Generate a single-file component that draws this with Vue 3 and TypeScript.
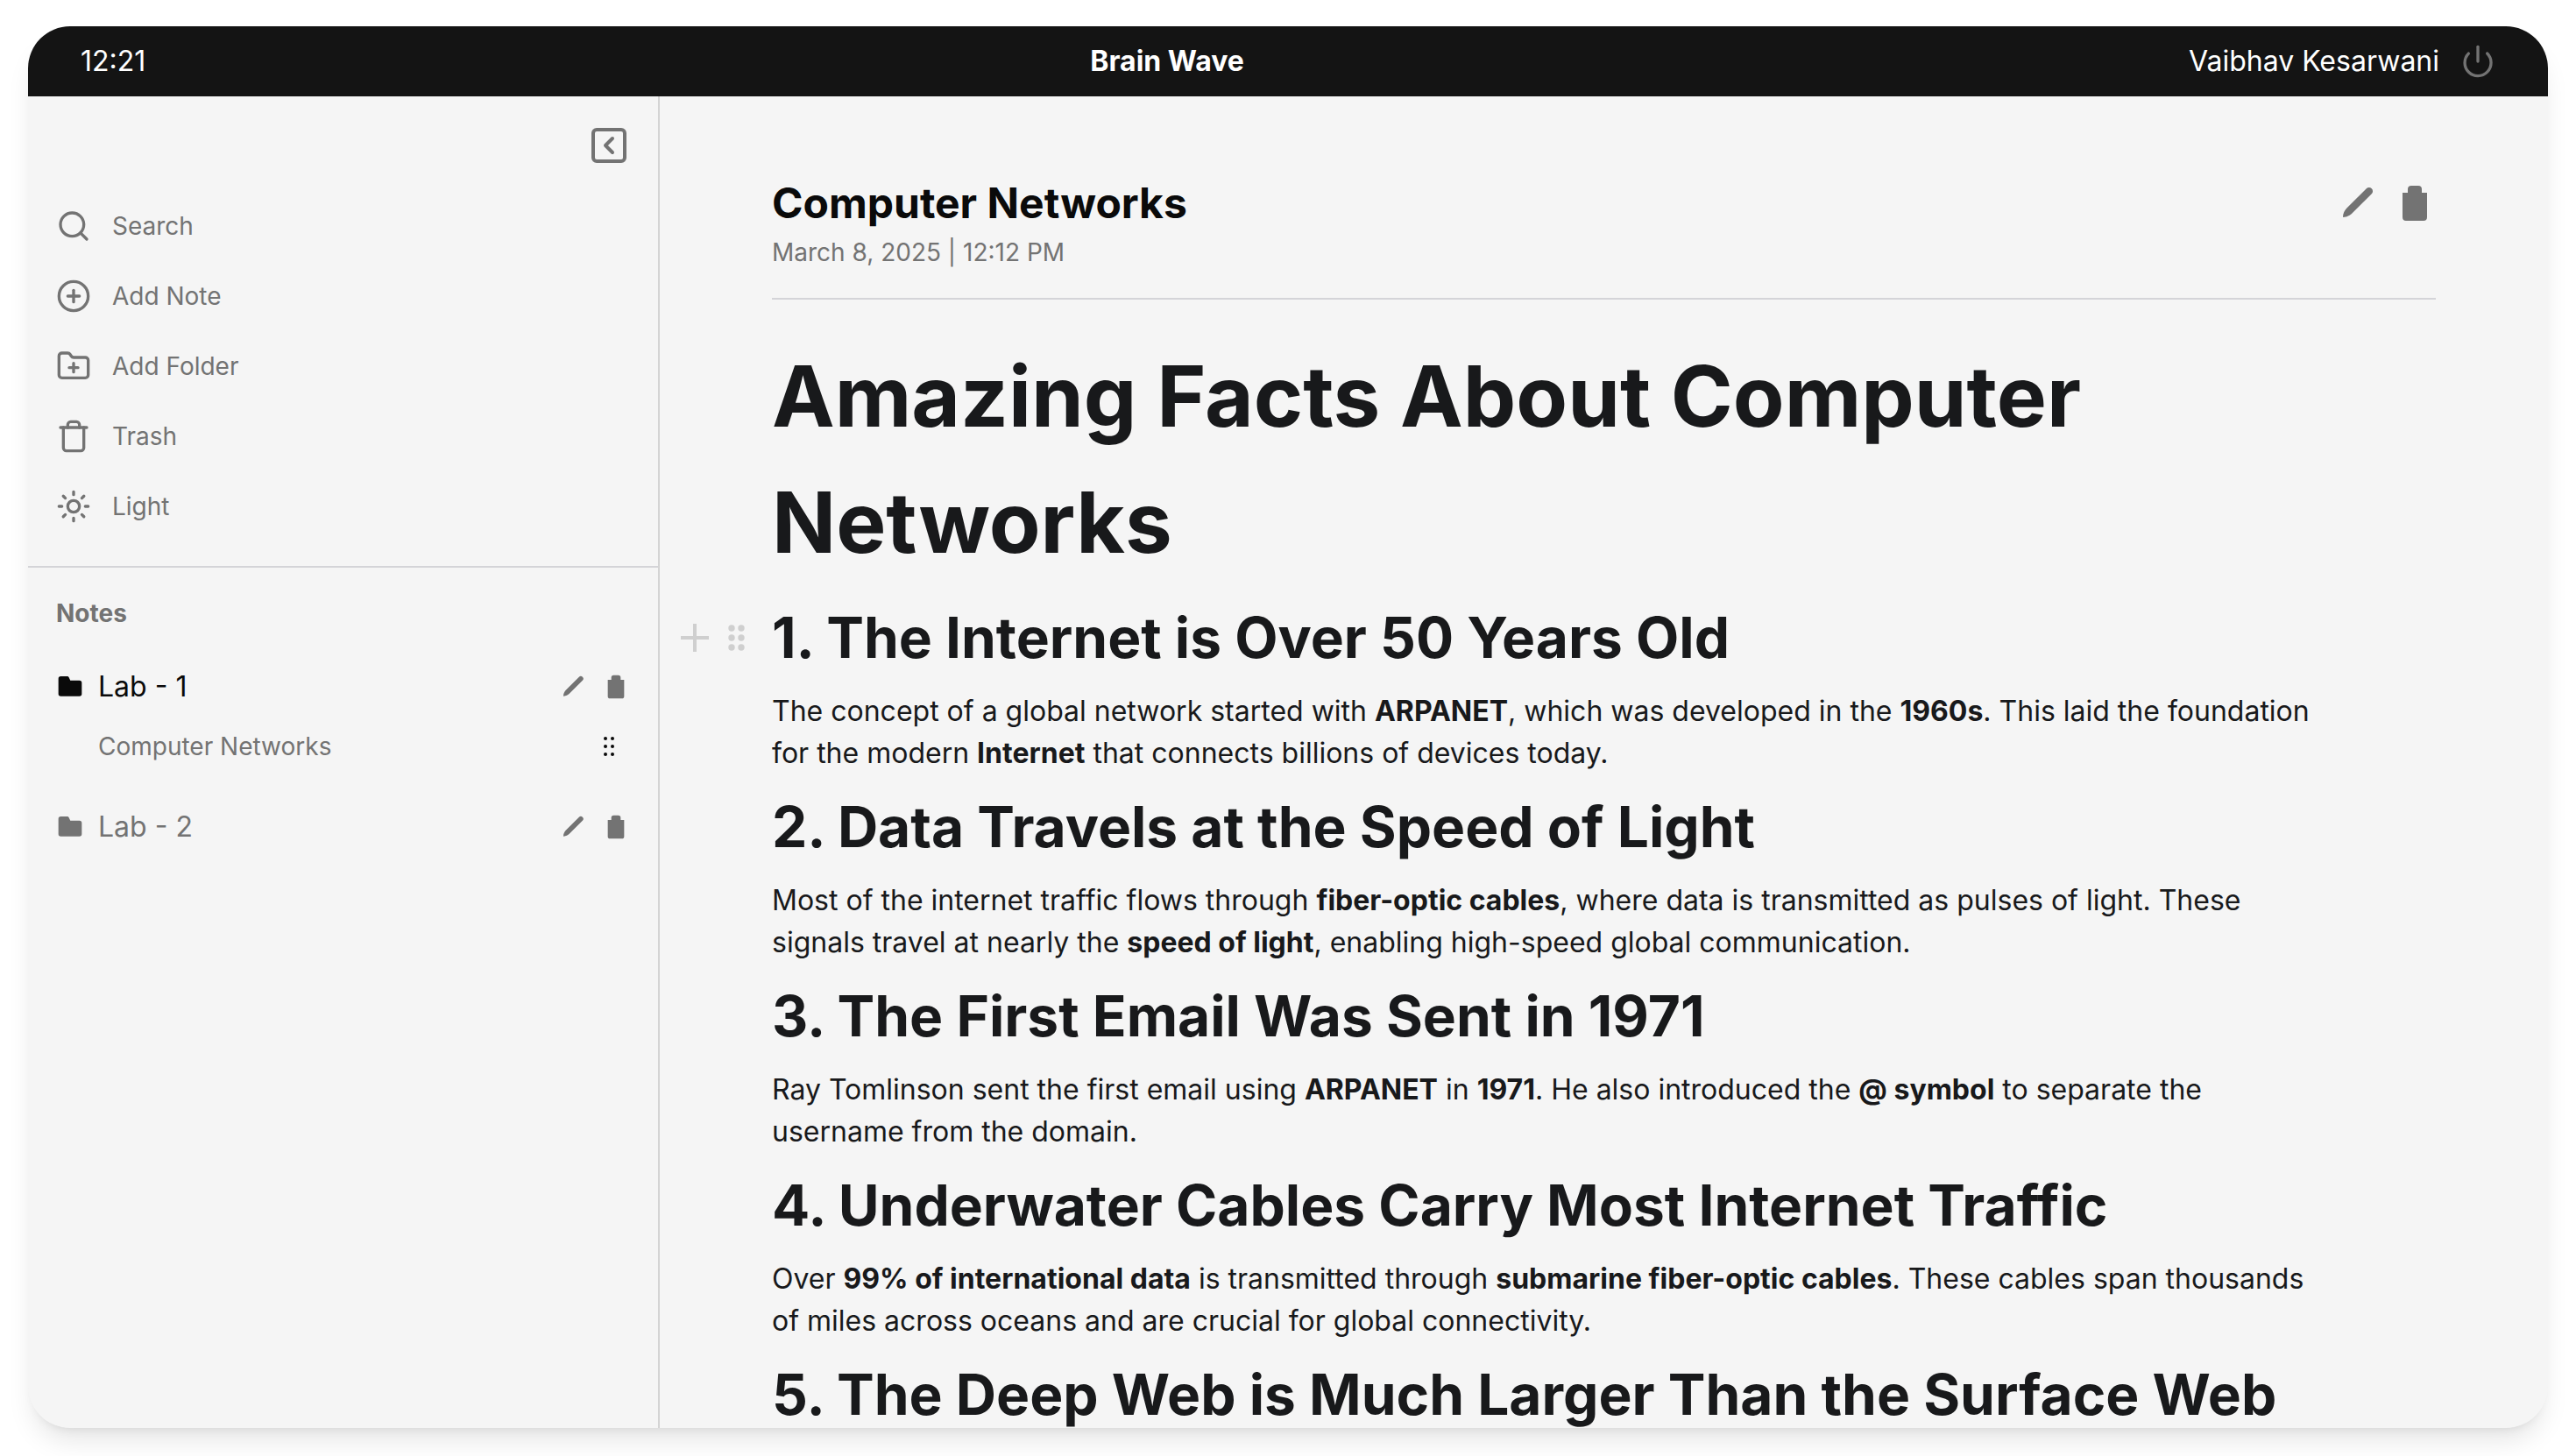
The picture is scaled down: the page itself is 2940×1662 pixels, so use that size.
<script setup lang="ts">
interface Span { text: string; bold?: boolean }
interface Section { title: string; active?: boolean; body: Span[] }

const menu: { label: string; icon: string }[] = [
  { label: 'Search', icon: '<circle cx="11" cy="11" r="8"/><path d="m21 21-4.3-4.3"/>' },
  { label: 'Add Note', icon: '<circle cx="12" cy="12" r="10"/><path d="M8 12h8"/><path d="M12 8v8"/>' },
  { label: 'Add Folder', icon: '<path d="M12 10v6"/><path d="M9 13h6"/><path d="M20 20a2 2 0 0 0 2-2V8a2 2 0 0 0-2-2h-7.9a2 2 0 0 1-1.69-.9L9.6 3.9A2 2 0 0 0 7.93 3H4a2 2 0 0 0-2 2v13a2 2 0 0 0 2 2Z"/>' },
  { label: 'Trash', icon: '<path d="M3 6h18"/><path d="M19 6v14c0 1-1 2-2 2H7c-1 0-2-1-2-2V6"/><path d="M8 6V4c0-1 1-2 2-2h4c1 0 2 1 2 2v2"/>' },
  { label: 'Light', icon: '<circle cx="12" cy="12" r="4"/><path d="M12 2v2M12 20v2M4.93 4.93l1.41 1.41M17.66 17.66l1.41 1.41M2 12h2M20 12h2M6.34 17.66l-1.41 1.41M19.07 4.93l-1.41 1.41"/>' },
]

const folders: { name: string; open: boolean; notes: string[] }[] = [
  { name: 'Lab - 1', open: true, notes: ['Computer Networks'] },
  { name: 'Lab - 2', open: false, notes: [] },
]

const sections: Section[] = [
  {
    title: '1. The Internet is Over 50 Years Old',
    active: true,
    body: [
      { text: 'The concept of a global network started with ' },
      { text: 'ARPANET', bold: true },
      { text: ', which was developed in the ' },
      { text: '1960s', bold: true },
      { text: '. This laid the foundation for the modern ' },
      { text: 'Internet', bold: true },
      { text: ' that connects billions of devices today.' },
    ],
  },
  {
    title: '2. Data Travels at the Speed of Light',
    body: [
      { text: 'Most of the internet traffic flows through ' },
      { text: 'fiber-optic cables', bold: true },
      { text: ', where data is transmitted as pulses of light. These signals travel at nearly the ' },
      { text: 'speed of light', bold: true },
      { text: ', enabling high-speed global communication.' },
    ],
  },
  {
    title: '3. The First Email Was Sent in 1971',
    body: [
      { text: 'Ray Tomlinson sent the first email using ' },
      { text: 'ARPANET', bold: true },
      { text: ' in ' },
      { text: '1971', bold: true },
      { text: '. He also introduced the ' },
      { text: '@ symbol', bold: true },
      { text: ' to separate the username from the domain.' },
    ],
  },
  {
    title: '4. Underwater Cables Carry Most Internet Traffic',
    body: [
      { text: 'Over ' },
      { text: '99% of international data', bold: true },
      { text: ' is transmitted through ' },
      { text: 'submarine fiber-optic cables', bold: true },
      { text: '. These cables span thousands of miles across oceans and are crucial for global connectivity.' },
    ],
  },
  { title: '5. The Deep Web is Much Larger Than the Surface Web', body: [] },
]

const pencilPath = 'M16.4 3.6a2.12 2.12 0 0 1 3 3L8.1 17.9C7.1 18.9 5 20 3.3 20c-.25 0-.3-.1-.3-.4C3 18 4 16 5.1 14.9Z'
const trashPath = 'M5 6h3V4a2 2 0 0 1 2-2h4a2 2 0 0 1 2 2v2h3v14a2 2 0 0 1-2 2H7a2 2 0 0 1-2-2Z'
</script>

<template>
  <div class="desktop">
    <div class="window">
      <header class="topbar">
        <time class="clock">12:21</time>
        <strong class="brand">Brain Wave</strong>
        <div class="account">
          <span>Vaibhav Kesarwani</span>
          <button type="button" class="icon-btn power" aria-label="Log out">
            <svg class="icon-40 stroke" viewBox="0 0 24 24"><path d="M12 2v10" /><path d="M18.4 6.6a9 9 0 1 1-12.77.04" /></svg>
          </button>
        </div>
      </header>

      <div class="columns">
        <aside class="sidebar">
          <div class="tools">
            <button type="button" class="icon-btn collapse" aria-label="Collapse sidebar">
              <svg class="icon-48 stroke" viewBox="0 0 24 24"><rect x="3" y="3" width="18" height="18" rx="2" /><path d="m14 16-4-4 4-4" /></svg>
            </button>
            <nav class="menu">
              <button v-for="item in menu" :key="item.label" type="button" class="menu-item">
                <svg class="icon-40 stroke" viewBox="0 0 24 24" v-html="item.icon"></svg>
                <span>{{ item.label }}</span>
              </button>
            </nav>
          </div>

          <section class="library">
            <h2 class="library-title">Notes</h2>
            <div v-for="folder in folders" :key="folder.name" class="folder">
              <div class="folder-row" :class="{ open: folder.open }">
                <button type="button" class="folder-name">
                  <svg class="icon-32" viewBox="0 0 24 24"><path d="M4 3h5.500c.7 0 1.100.4 1.500 1l1.200 2.600H20a2 2 0 0 1 2 2V18a2 2 0 0 1-2 2H4a2 2 0 0 1-2-2V5a2 2 0 0 1 2-2Z" /></svg>
                  <span>{{ folder.name }}</span>
                </button>
                <div class="row-actions">
                  <button type="button" class="icon-btn" aria-label="Rename folder"><svg class="icon-32" viewBox="0 0 24 24"><path :d="pencilPath" /></svg></button>
                  <button type="button" class="icon-btn" aria-label="Delete folder"><svg class="icon-32" viewBox="0 0 24 24"><path :d="trashPath" /></svg></button>
                </div>
              </div>
              <div v-for="note in folder.notes" :key="note" class="note-row">
                <a href="#">{{ note }}</a>
                <button type="button" class="icon-btn grip" aria-label="Move note">
                  <svg class="icon-48" viewBox="0 0 48 48">
                    <template v-for="y in [15, 24, 33]" :key="y"><circle cx="20" :cy="y" r="2" /><circle cx="28" :cy="y" r="2" /></template>
                  </svg>
                </button>
              </div>
            </div>
          </section>
        </aside>

        <main class="page">
          <header class="note-head">
            <div>
              <h1 class="note-title">Computer Networks</h1>
              <p class="note-date">March 8, 2025 | 12:12 PM</p>
            </div>
            <div class="row-actions">
              <button type="button" class="icon-btn" aria-label="Edit note"><svg class="icon-48" viewBox="0 0 24 24"><path :d="pencilPath" /></svg></button>
              <button type="button" class="icon-btn" aria-label="Delete note"><svg class="icon-48" viewBox="0 0 24 24"><path :d="trashPath" /></svg></button>
            </div>
          </header>

          <article class="doc">
            <h1>Amazing Facts About Computer Networks</h1>
            <section v-for="section in sections" :key="section.title" class="block">
              <div v-if="section.active" class="side-menu">
                <button type="button" class="icon-btn" aria-label="Add block">
                  <svg class="icon-48" viewBox="0 0 48 48"><path d="M22 8h4v14h14v4H26v14h-4V26H8v-4h14Z" /></svg>
                </button>
                <button type="button" class="icon-btn" aria-label="Drag block">
                  <svg class="icon-48" viewBox="0 0 48 48">
                    <template v-for="y in [13, 24, 35]" :key="y"><circle cx="18" :cy="y" r="3.7" /><circle cx="29" :cy="y" r="3.7" /></template>
                  </svg>
                </button>
              </div>
              <h2>{{ section.title }}</h2>
              <p v-if="section.body.length"><template v-for="(span, i) in section.body" :key="i"><strong v-if="span.bold">{{ span.text }}</strong><template v-else>{{ span.text }}</template></template></p>
            </section>
          </article>
        </main>
      </div>
    </div>
  </div>
</template>

<style>
body {
  background: #fff;
}
</style>

<style scoped>
*,
*::before,
*::after {
  box-sizing: border-box;
}
h1,
h2,
p {
  margin: 0;
}
button {
  margin: 0;
  padding: 0;
  border: 0;
  background: none;
  color: inherit;
  font: inherit;
  cursor: pointer;
}
.desktop {
  display: flex;
  height: 100vh;
  padding: 30px 32px 32px;
  overflow: hidden;
}
.window {
  display: flex;
  flex: 1;
  flex-direction: column;
  min-width: 0;
  border-radius: 48px;
  overflow: hidden;
  background: #f5f5f5;
  color: #737373;
  font-family: Inter, "Liberation Sans", sans-serif;
  box-shadow: 0 20px 30px -6px rgba(0, 0, 0, 0.1), 0 8px 12px -8px rgba(0, 0, 0, 0.1);
}
.topbar {
  display: flex;
  align-items: center;
  justify-content: space-between;
  flex: none;
  height: 80px;
  padding: 0 60px;
  background: #141414;
  color: #fff;
  font-size: 32px;
  line-height: 48px;
}
.brand {
  font-weight: 700;
}
.account {
  display: flex;
  align-items: center;
  gap: 24px;
}
.power {
  color: #737373;
}
.icon-btn {
  display: flex;
  flex: none;
}
svg {
  display: block;
  flex: none;
  fill: currentColor;
}
svg.stroke {
  fill: none;
  stroke: currentColor;
  stroke-width: 2;
  stroke-linecap: round;
  stroke-linejoin: round;
}
.icon-32 {
  width: 32px;
  height: 32px;
}
.icon-40 {
  width: 40px;
  height: 40px;
}
.icon-48 {
  width: 48px;
  height: 48px;
}
.columns {
  display: flex;
  flex: 1;
  min-height: 0;
}
.sidebar {
  flex: none;
  width: calc(25% + 2px);
  border-right: 2px solid #d4d4d4;
  font-size: 28px;
  line-height: 40px;
}
.tools {
  display: flex;
  flex-direction: column;
  gap: 48px;
  padding: 32px 32px 48px;
  border-bottom: 2px solid #d4d4d8;
}
.collapse {
  align-self: flex-end;
}
.menu {
  display: flex;
  flex-direction: column;
  gap: 40px;
}
.menu-item {
  display: flex;
  align-items: center;
  gap: 24px;
}
.library {
  padding: 32px;
}
.library-title {
  margin-bottom: 40px;
  font-size: 28px;
  font-weight: 700;
  line-height: 40px;
}
.folder {
  margin-bottom: 48px;
}
.folder-row,
.note-row {
  display: flex;
  align-items: center;
  justify-content: space-between;
}
.folder-name {
  display: flex;
  align-items: center;
  gap: 16px;
  font-size: 32px;
  line-height: 48px;
}
.open .folder-name {
  color: #0a0a0a;
}
.row-actions {
  display: flex;
  gap: 16px;
}
.note-row {
  height: 40px;
  margin-top: 24px;
  padding-left: 48px;
}
.note-row a {
  color: inherit;
  text-decoration: none;
}
.grip {
  color: #0a0a0a;
}
.page {
  flex: 1;
  min-width: 0;
  padding: 90px 128px 0;
  overflow: hidden;
}
.note-head {
  display: flex;
  justify-content: space-between;
  padding-bottom: 32px;
  border-bottom: 2px solid #d4d4d8;
}
.note-head .row-actions {
  padding-top: 8px;
}
.note-title {
  color: #0a0a0a;
  font-size: 48px;
  font-weight: 700;
  line-height: 64px;
}
.note-date {
  margin-top: 4px;
  font-size: 28px;
  line-height: 40px;
}
.doc {
  padding: 32px 120px 0 0;
  color: #18191b;
}
.doc h1,
.doc h2,
.doc p {
  padding: 6px 0;
  line-height: 1.5;
}
.doc h1 {
  font-size: 96px;
  font-weight: 700;
}
.doc h2 {
  font-size: 64px;
  font-weight: 700;
}
.doc p {
  font-size: 32px;
}
.doc strong {
  font-weight: 700;
}
.block {
  position: relative;
}
.side-menu {
  position: absolute;
  top: 30px;
  right: 100%;
  display: flex;
  padding-right: 16px;
  color: #cfcfcf;
}
</style>
